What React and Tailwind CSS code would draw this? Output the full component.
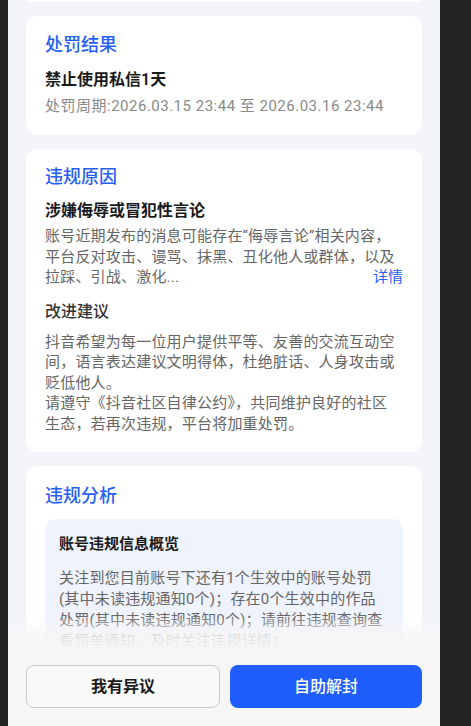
import React from 'react';

const Card = ({ title, className = '', children }) => (
    <div className={`mx-[18px] rounded-xl bg-white px-[19px] ${className}`}>
        <div className="text-[18px] leading-[26px] font-medium text-[#2660f5]">{title}</div>
        {children}
    </div>
);

const Lines = ({ lines, className = '' }) => (
    <div className={`text-[15px] leading-[20.5px] text-[#666] tracking-[0.2px] ${className}`}>
        {lines.map((l, i) => (
            <div key={i} className="whitespace-nowrap">{l}</div>
        ))}
    </div>
);

export default function App() {
    return (
        <div className="flex h-[726px] w-[471px] bg-[#232323] [font-family:Roboto,'Noto_Sans_CJK_SC',sans-serif]">
            <div className="relative ml-[8px] flex h-full w-[432px] flex-col gap-[14px] overflow-hidden bg-[#f3f5fa]">
                {/* tail of the previous card */}
                <div className="mx-[18px] h-[2px] rounded-b-xl bg-white" />

                <Card title="处罚结果" className="pt-[16px] pb-[19px]">
                    <div className="mt-[11px] text-[16px] leading-[22px] font-semibold text-[#1a1a1a]">禁止使用私信1天</div>
                    <div className="mt-[5px] text-[15px] leading-[20px] tracking-[0.5px] text-[#8a8a8a] whitespace-nowrap">
                        处罚周期:2026.03.15 23:44 至 2026.03.16 23:44
                    </div>
                </Card>

                <Card title="违规原因" className="pt-[15px] pb-[18px]">
                    <div className="mt-[10px] text-[16px] leading-[22px] font-semibold text-[#1a1a1a]">涉嫌侮辱或冒犯性言论</div>
                    <Lines
                        className="mt-[4px]"
                        lines={['账号近期发布的消息可能存在“侮辱言论”相关内容，', '平台反对攻击、谩骂、抹黑、丑化他人或群体，以及', '拉踩、引战、激化...']}
                    />
                    <div className="-mt-[20.5px] text-right text-[15px] leading-[20.5px] text-[#2660f5]">详情</div>
                    <div className="mt-[13px] text-[16px] leading-[22px] font-medium text-[#333]">改进建议</div>
                    <Lines
                        className="mt-[9px]"
                        lines={[
                            '抖音希望为每一位用户提供平等、友善的交流互动空',
                            '间，语言表达建议文明得体，杜绝脏话、人身攻击或',
                            '贬低他人。',
                            '请遵守《抖音社区自律公约》，共同维护良好的社区',
                            '生态，若再次违规，平台将加重处罚。',
                        ]}
                    />
                </Card>

                <Card title="违规分析" className="pt-[17px] pb-[18px]">
                    <div className="mt-[10px] rounded-[10px] bg-[#eff3fc] px-[14px] pt-[14px] pb-[14px]">
                        <div className="text-[15px] leading-[22px] font-semibold text-[#1a1a1a]">账号违规信息概览</div>
                        <Lines
                            className="mt-[13px] leading-[21px]"
                            lines={[
                                '关注到您目前账号下还有1个生效中的账号处罚',
                                '(其中未读违规通知0个)；存在0个生效中的作品',
                                '处罚(其中未读违规通知0个)；请前往违规查询查',
                                '看罚单通知，及时关注违规详情；',
                                '如有疑问可点击下方按钮进行申诉。',
                            ]}
                        />
                    </div>
                </Card>

                {/* bottom action bar over the scrolled content */}
                <div className="absolute inset-x-0 bottom-0">
                    <div className="h-[34px] bg-gradient-to-b from-[#f6f6f6]/0 via-[#f6f6f6]/80 to-[#f6f6f6]" />
                    <div className="flex gap-[10px] bg-[#f6f6f6] px-[18px] pt-[15px] pb-[18px]">
                        <button className="h-[43px] flex-1 rounded-[8px] border border-[#c9c9c9] bg-[#f9f9f9] text-[16px] font-semibold text-[#1a1a1a]">
                            我有异议
                        </button>
                        <button className="h-[43px] flex-1 rounded-[8px] bg-[#1f5efd] text-[16px] font-medium text-white">
                            自助解封
                        </button>
                    </div>
                </div>
            </div>
        </div>
    );
}
